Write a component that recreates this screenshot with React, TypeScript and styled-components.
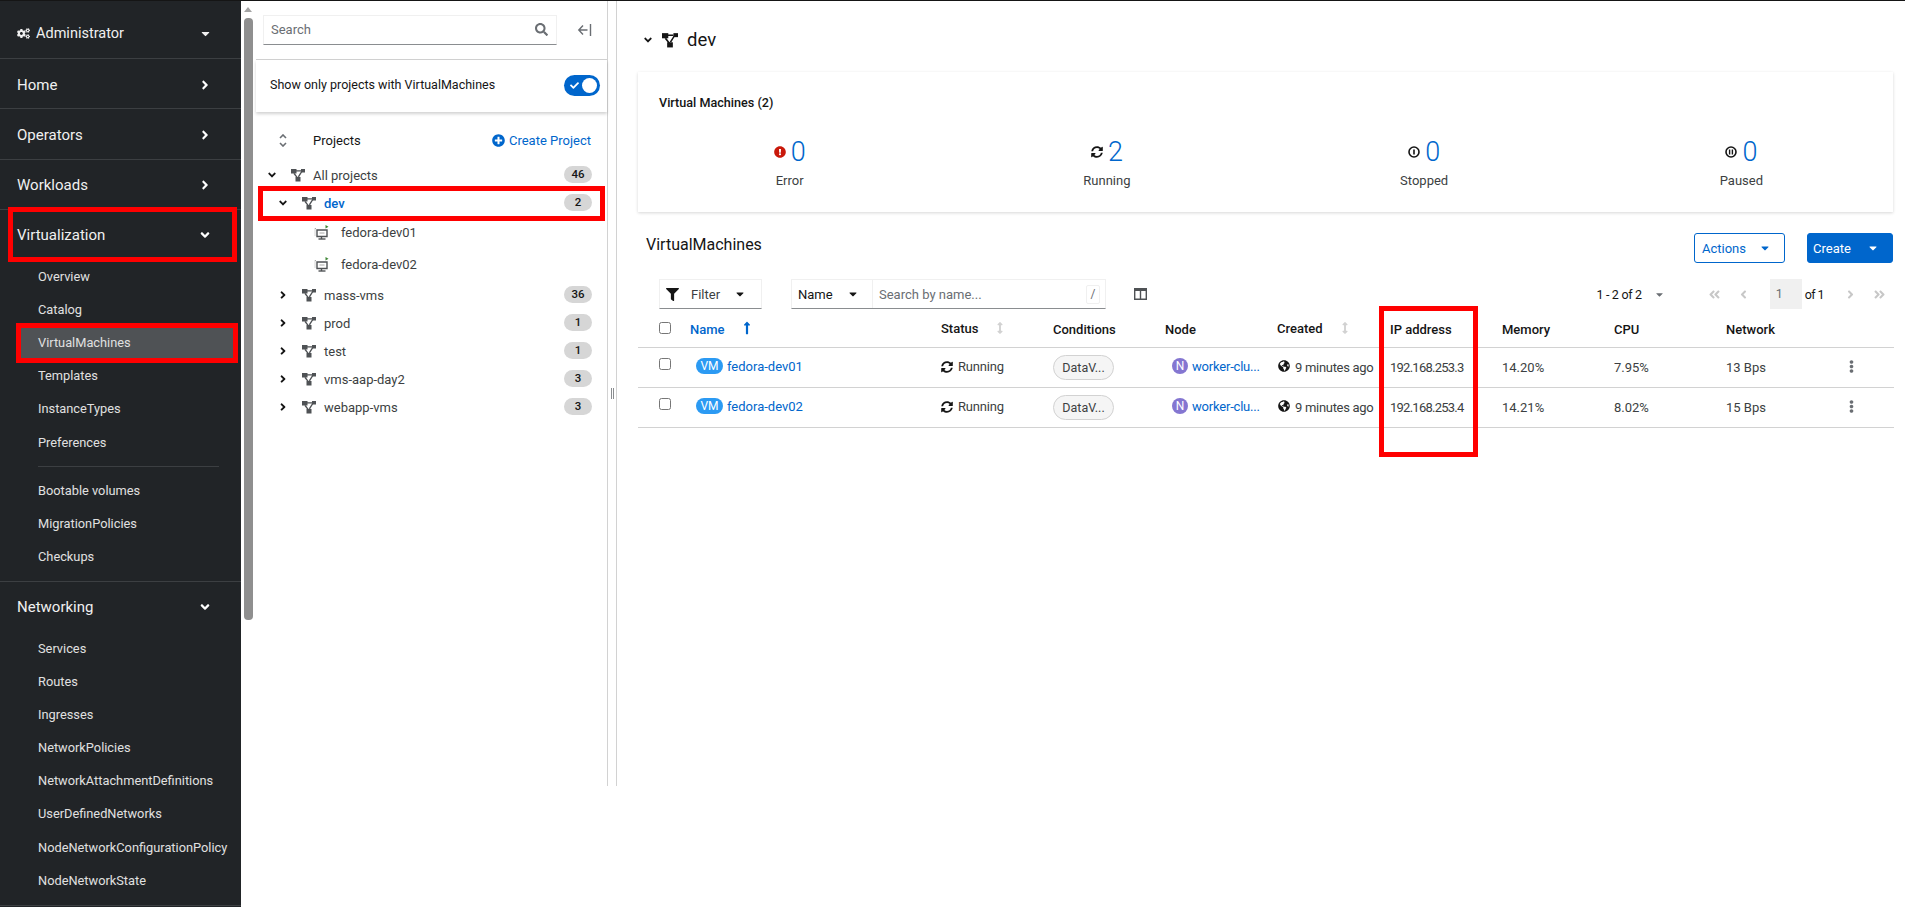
import React from 'react';
import styled, { createGlobalStyle } from 'styled-components';
import {
  FaAngleDown,
  FaAngleRight,
  FaAngleDoubleLeft,
  FaAngleDoubleRight,
  FaAngleLeft,
  FaArrowsAltV,
  FaCaretDown,
  FaCheck,
  FaCogs,
  FaEllipsisV,
  FaExclamationCircle,
  FaFilter,
  FaGlobeAmericas,
  FaLongArrowAltUp,
  FaPlusCircle,
  FaSearch,
  FaSyncAlt,
} from 'react-icons/fa';

const GlobalStyle = createGlobalStyle`
  html, body {
    margin: 0;
    padding: 0;
    background: #fff;
  }
  body {
    font-family: Roboto, "Liberation Sans", sans-serif;
    font-size: 13px;
    color: #151515;
  }
  * {
    box-sizing: border-box;
  }
`;

const Page = styled.div`
  position: relative;
  display: flex;
  width: 1905px;
  height: 907px;
  overflow: hidden;
  border-top: 1px solid #151515;
`;

// Red boxes drawn over the screenshot by whoever annotated it
const Annotation = styled.div<{ $x: number; $y: number; $w: number; $h: number }>`
  position: absolute;
  left: ${(p) => p.$x}px;
  top: ${(p) => p.$y}px;
  width: ${(p) => p.$w}px;
  height: ${(p) => p.$h}px;
  border: 5px solid #f00;
  pointer-events: none;
`;

const Sidebar = styled.nav`
  flex: 0 0 241px;
  background: #212427;
  color: #f0f0f0;
`;

const Perspective = styled.div`
  display: flex;
  align-items: center;
  height: 58px;
  padding: 8px 29px 0 17px;
  border-bottom: 1px solid #3c3f42;
  font-size: 14.5px;
  svg:first-child {
    font-size: 13px;
    margin-right: 6px;
  }
  svg:last-child {
    margin-left: auto;
    font-size: 13px;
  }
`;

const GroupHeader = styled.div<{ $open?: boolean }>`
  display: flex;
  align-items: center;
  justify-content: space-between;
  height: ${(p) => (p.$open ? '48px' : '50.4px')};
  padding: 2px 29px 0 17px;
  border-bottom: ${(p) => (p.$open ? 'none' : '1px solid #3c3f42')};
  font-size: 15px;
  svg {
    font-size: 14px;
    color: #fff;
  }
`;

const SubList = styled.ul`
  display: flex;
  flex-direction: column;
  list-style: none;
  margin: 0;
  padding: 1.4px 0 8px;
  border-bottom: 1px solid #3c3f42;
`;

const SubItem = styled.li<{ $active?: boolean }>`
  display: flex;
  align-items: center;
  flex: 0 0 30px;
  margin: 1.6px 7px 1.6px 21px;
  padding-left: 17px;
  font-size: 12.8px;
  white-space: nowrap;
  color: #e0e0e0;
  background: ${(p) => (p.$active ? '#4f5255' : 'transparent')};
`;

const SubSeparator = styled.li`
  flex: 0 0 1px;
  margin: 7.4px 22px 6.4px 38px;
  background: #3c3f42;
`;

const ScrollTrack = styled.div`
  flex: 0 0 15px;
  padding-left: 3px;
  background: #fff;
`;

const ScrollArrow = styled.div`
  width: 0;
  height: 0;
  margin: 6px 0;
  border-left: 4.5px solid transparent;
  border-right: 4.5px solid transparent;
  border-bottom: 5px solid #a3a3a3;
`;

const ScrollThumb = styled.div`
  width: 9px;
  height: 602px;
  border-radius: 4px;
  background: #8f8f8f;
`;

const ProjectsPanel = styled.aside`
  flex: 0 0 352px;
  height: 785px;
  border-right: 1px solid #d2d2d2;
`;

const SearchRow = styled.div`
  display: flex;
  align-items: center;
  height: 59px;
  padding: 0 15px 1px 7px;
  border-bottom: 1px solid #d2d2d2;
`;

const SearchBox = styled.div`
  display: flex;
  align-items: center;
  width: 294px;
  height: 30px;
  padding: 0 8px 0 7px;
  border: 1px solid #f0f0f0;
  border-bottom-color: #8a8d90;
  svg {
    font-size: 13px;
    color: #6a6e73;
  }
`;

const PlainInput = styled.input`
  flex: 1;
  min-width: 0;
  border: none;
  outline: none;
  padding: 0;
  background: transparent;
  font: inherit;
  font-size: 13px;
  color: #151515;
  &::placeholder {
    color: #6a6e73;
    opacity: 1;
  }
`;

const CollapseIcon = styled.svg`
  width: 15px;
  height: 14px;
  margin-left: auto;
  color: #6a6e73;
`;

const ToggleRow = styled.div`
  display: flex;
  align-items: center;
  justify-content: space-between;
  height: 52px;
  padding: 0 7px 3px 14px;
  font-size: 12.5px;
  box-shadow: 0 2px 3px rgba(3, 3, 3, 0.18);
`;

const Toggle = styled.div`
  display: flex;
  align-items: center;
  justify-content: space-between;
  width: 36px;
  height: 21px;
  margin-top: 2px;
  padding: 0 3px 0 6px;
  border-radius: 11px;
  background: #0066cc;
  svg {
    font-size: 9px;
    color: #fff;
  }
`;

const ToggleKnob = styled.span`
  width: 15px;
  height: 15px;
  border-radius: 50%;
  background: #fff;
`;

const ProjectsHeader = styled.div`
  display: flex;
  align-items: center;
  height: 49px;
  padding: 7px 16px 0 23px;
  font-size: 13px;
`;

const HeaderSortIcon = styled.span`
  display: flex;
  width: 34px;
`;

const CreateLink = styled.a`
  display: flex;
  align-items: center;
  gap: 4px;
  margin-left: auto;
  color: #0066cc;
  svg {
    font-size: 13px;
  }
`;

const TreeRow = styled.div<{ $indent: number }>`
  display: flex;
  align-items: center;
  height: 28px;
  padding-left: ${(p) => p.$indent}px;
  padding-right: 15px;
  font-size: 13px;
  color: #3c3f42;
`;

const TreeChevron = styled.span`
  display: flex;
  width: 25px;
  font-size: 12px;
  color: #151515;
`;

const TreeName = styled.span<{ $active?: boolean }>`
  margin-left: 8px;
  color: ${(p) => (p.$active ? '#0066cc' : '#3c3f42')};
  font-weight: ${(p) => (p.$active ? 500 : 400)};
`;

const CountBadge = styled.span`
  margin-left: auto;
  width: 28px;
  height: 17px;
  margin-top: -2px;
  border-radius: 9px;
  background: #d6d6d6;
  color: #151515;
  font-size: 11.5px;
  font-weight: 500;
  line-height: 17px;
  text-align: center;
`;

const VmList = styled.div`
  margin: -1px 0 1px;
`;

const VmRow = styled.div`
  display: flex;
  align-items: center;
  gap: 12px;
  height: 32px;
  padding-left: 58px;
  font-size: 13px;
  color: #3c3f42;
`;

const Splitter = styled.div`
  display: flex;
  flex: 0 0 8px;
  height: 785px;
  align-items: center;
  justify-content: center;
`;

const SplitterHandle = styled.span`
  width: 3px;
  height: 11px;
  border-left: 1px solid #8a8d90;
  border-right: 1px solid #8a8d90;
`;

const Main = styled.main`
  flex: 1;
  min-width: 0;
  height: 785px;
  padding: 0 12px 0 21px;
  border-left: 1px solid #d2d2d2;
`;

const ProjectTitle = styled.div`
  display: flex;
  align-items: center;
  height: 71px;
  padding: 6px 0 0 4px;
  font-size: 18.5px;
  color: #151515;
  > svg:first-child {
    font-size: 12px;
    margin-right: 8px;
  }
  > svg:nth-child(2) {
    margin-right: 9px;
  }
`;

const Card = styled.section`
  height: 140px;
  padding-top: 21px;
  box-shadow: 0 1px 3px rgba(3, 3, 3, 0.16);
`;

const CardTitle = styled.h3`
  margin: 0 0 0 21px;
  height: 20px;
  font-size: 12.6px;
  font-weight: 500;
  line-height: 20px;
`;

const StatsGrid = styled.div`
  display: grid;
  grid-template-columns: repeat(4, 1fr);
  margin: 23px -7px 0;
`;

const Stat = styled.div`
  display: flex;
  flex-direction: column;
  align-items: center;
`;

const StatValue = styled.div`
  display: flex;
  align-items: center;
  gap: 5px;
  height: 32px;
  color: #0066cc;
  font-size: 27px;
  font-weight: 300;
`;

const StatLabel = styled.div`
  margin-top: 3px;
  font-size: 13px;
  line-height: 20px;
  color: #3c3f42;
`;

const SectionHeader = styled.div`
  display: flex;
  align-items: center;
  height: 30px;
  margin-top: 21px;
  padding-left: 8px;
`;

const SectionTitle = styled.h2`
  margin: 0 auto 7px 0;
  font-size: 16px;
  font-weight: 400;
`;

const ActionButton = styled.button<{ $primary?: boolean }>`
  display: flex;
  align-items: center;
  justify-content: space-between;
  width: ${(p) => (p.$primary ? '86px' : '91px')};
  height: 30px;
  margin-left: ${(p) => (p.$primary ? '22px' : '0')};
  padding: 0 13px 0 ${(p) => (p.$primary ? '5px' : '7px')};
  border: 1px solid #0066cc;
  border-radius: 3px;
  background: ${(p) => (p.$primary ? '#0066cc' : '#fff')};
  color: ${(p) => (p.$primary ? '#fff' : '#0066cc')};
  font: inherit;
  font-size: 13px;
  svg {
    font-size: 12px;
  }
`;

const Toolbar = styled.div`
  display: flex;
  align-items: center;
  height: 30px;
  margin-top: 16px;
  padding-left: 21px;
`;

const FilterSelect = styled.div`
  display: flex;
  align-items: center;
  width: 103px;
  height: 30px;
  padding: 0 15px 0 6px;
  border: 1px solid #f0f0f0;
  border-bottom-color: #8a8d90;
  font-size: 13px;
  color: #3c3f42;
  svg:first-child {
    font-size: 13px;
    color: #151515;
    margin-right: 12px;
  }
  svg:last-child {
    margin-left: auto;
    font-size: 12px;
    color: #151515;
  }
`;

const NameFilter = styled.div`
  display: flex;
  align-items: center;
  width: 315px;
  height: 30px;
  margin-left: 29px;
  border: 1px solid #f0f0f0;
  border-bottom-color: #8a8d90;
`;

const NameSelect = styled.div`
  display: flex;
  align-items: center;
  justify-content: space-between;
  flex: 0 0 81px;
  height: 100%;
  padding: 0 13px 0 6px;
  border-right: 1px solid #f0f0f0;
  font-size: 13px;
  svg {
    font-size: 12px;
  }
`;

const NameInputWrap = styled.div`
  display: flex;
  flex: 1;
  align-items: center;
  padding: 0 5px 0 6px;
`;

const SlashHint = styled.kbd`
  width: 14px;
  height: 19px;
  border: 1px solid #f0f0f0;
  border-radius: 2px;
  font-family: inherit;
  font-size: 12px;
  line-height: 17px;
  text-align: center;
  color: #6a6e73;
`;

const ColumnsIcon = styled.svg`
  width: 13px;
  height: 12px;
  margin-left: 28px;
  color: #4f5255;
`;

const Pagination = styled.div`
  display: flex;
  align-items: center;
  height: 30px;
  margin-left: auto;
  padding-right: 7px;
  font-size: 12.5px;
  letter-spacing: -0.3px;
  color: #151515;
`;

const PageCaret = styled.span`
  display: flex;
  margin: 0 43px 0 12px;
  font-size: 11px;
  color: #6a6e73;
`;

const PageArrow = styled.span<{ $gap?: number }>`
  display: flex;
  margin-right: ${(p) => p.$gap ?? 0}px;
  font-size: 13px;
  color: #c7c7c7;
`;

const PageBox = styled.span`
  width: 32px;
  height: 30px;
  padding-left: 6px;
  background: #f0f0f0;
  color: #6a6e73;
  line-height: 30px;
`;

const PageOf = styled.span`
  margin: 0 20px 0 3px;
  letter-spacing: -0.6px;
`;

const Table = styled.table`
  width: 1256px;
  margin-top: 3px;
  border-collapse: collapse;
  table-layout: fixed;
`;

const Th = styled.th<{ $width: number; $active?: boolean }>`
  width: ${(p) => p.$width}px;
  height: 35px;
  padding: 0 0 0 8px;
  border-bottom: 1px solid #d2d2d2;
  text-align: left;
  font-size: 13px;
  font-weight: 500;
  color: ${(p) => (p.$active ? '#0066cc' : '#151515')};
  white-space: nowrap;
`;

const SortIcon = styled.span<{ $gap: number; $active?: boolean }>`
  margin-left: ${(p) => p.$gap}px;
  font-size: ${(p) => (p.$active ? '14px' : '12px')};
  color: ${(p) => (p.$active ? '#0066cc' : '#d2d2d2')};
  vertical-align: -1px;
`;

const Td = styled.td`
  height: 40px;
  padding: 0 0 0 8px;
  border-bottom: 1px solid #d2d2d2;
  font-size: 13px;
  color: #3c3f42;
  white-space: nowrap;
`;

const IpText = styled.span`
  letter-spacing: -0.75px;
`;

const CheckCell = styled.td`
  padding: 0 0 6px 21px;
  border-bottom: 1px solid #d2d2d2;
`;

const CheckHead = styled.th`
  width: 44px;
  padding: 0 0 3px 21px;
  border-bottom: 1px solid #d2d2d2;
  text-align: left;
`;

const Checkbox = styled.input.attrs({ type: 'checkbox' })`
  display: block;
  width: 12px;
  height: 12px;
  margin: 0;
`;

const ResourceLink = styled.span<{ $offset: number }>`
  display: flex;
  align-items: center;
  gap: 4px;
  margin-left: ${(p) => p.$offset}px;
  margin-top: -2px;
  color: #0066cc;
`;

const NodeName = styled.span`
  letter-spacing: -0.2px;
`;

const KindBadge = styled.span<{ $kind: 'vm' | 'node' }>`
  width: ${(p) => (p.$kind === 'vm' ? '27px' : '16px')};
  height: 16px;
  border-radius: 8px;
  background: ${(p) => (p.$kind === 'vm' ? '#2b9af3' : '#8476d1')};
  color: #fff;
  font-size: 12px;
  line-height: 16px;
  text-align: center;
`;

const StatusCell = styled.span`
  display: flex;
  align-items: center;
  gap: 5px;
  margin-top: -1px;
  letter-spacing: -0.2px;
  svg {
    font-size: 12px;
    color: #151515;
  }
`;

const ConditionChip = styled.span`
  display: inline-block;
  width: 61px;
  height: 25px;
  border: 1px solid #d2d2d2;
  border-radius: 13px;
  background: #f5f5f5;
  font-size: 12.5px;
  line-height: 23px;
  text-align: center;
  color: #3c3f42;
`;

const CreatedCell = styled.span`
  display: flex;
  align-items: center;
  gap: 5px;
  margin-left: 1px;
  letter-spacing: -0.3px;
  svg {
    font-size: 12px;
    color: #151515;
    margin-top: -3px;
  }
`;

const Kebab = styled.span`
  display: flex;
  justify-content: center;
  margin: -2px 0 0 0;
  width: 26px;
  font-size: 13px;
  color: #6a6e73;
`;

function ProjectIcon({ size = 14, color = '#4f5255' }: { size?: number; color?: string }) {
  return (
    <svg width={size} height={size} viewBox="0 0 14 14" fill={color}>
      <rect x="0" y="1" width="5.5" height="4.5" />
      <rect x="10" y="1" width="4" height="3.5" />
      <rect x="4.5" y="9" width="5" height="4.5" />
      <path d="M5 2.2h5v1.4H5zM3.6 5l3.4 4.4-1.1.8L2.4 5.8zM11.2 4l-3.2 5.2-1.2-.7L10 3.4z" />
    </svg>
  );
}

function VmIcon() {
  return (
    <svg width="15" height="15" viewBox="0 0 15 15" fill="none">
      <path d="M1 3.5h1.5M1 3.5v7" stroke="#a8a8a8" strokeWidth="1" strokeDasharray="1 1" />
      <path d="M3 5h10v6.5H3z" fill="#fff" stroke="#4f5255" strokeWidth="1.4" />
      <path d="M5.5 8h5" stroke="#a8a8a8" strokeWidth="1" />
      <path d="M4.5 14h7" stroke="#4f5255" strokeWidth="1.4" />
      <path d="M7.5 11.5v2.5" stroke="#4f5255" strokeWidth="1.4" />
      <path d="M11.5 0l3 1.8-3 1.8z" fill="#3e8635" />
    </svg>
  );
}

function OffIcon() {
  return (
    <svg width="12" height="12" viewBox="0 0 12 12" fill="none" stroke="#151515">
      <circle cx="6" cy="6" r="5" strokeWidth="1.6" />
      <path d="M6 3.4v5.2" strokeWidth="1.6" />
    </svg>
  );
}

function PauseIcon() {
  return (
    <svg width="12" height="12" viewBox="0 0 12 12" fill="none" stroke="#151515">
      <circle cx="6" cy="6" r="5" strokeWidth="1.6" />
      <path d="M4.6 3.6v4.8M7.4 3.6v4.8" strokeWidth="1.4" />
    </svg>
  );
}

const navGroups = ['Home', 'Operators', 'Workloads'];
const virtualizationItems = ['Overview', 'Catalog', 'VirtualMachines', 'Templates', 'InstanceTypes', 'Preferences'];
const virtualizationExtras = ['Bootable volumes', 'MigrationPolicies', 'Checkups'];
const networkingItems = [
  'Services',
  'Routes',
  'Ingresses',
  'NetworkPolicies',
  'NetworkAttachmentDefinitions',
  'UserDefinedNetworks',
  'NodeNetworkConfigurationPolicy',
  'NodeNetworkState',
];

const otherProjects = [
  { name: 'mass-vms', count: 36 },
  { name: 'prod', count: 1 },
  { name: 'test', count: 1 },
  { name: 'vms-aap-day2', count: 3 },
  { name: 'webapp-vms', count: 3 },
];

const stats = [
  { label: 'Error', value: 0, icon: <FaExclamationCircle size={12} color="#c9190b" /> },
  { label: 'Running', value: 2, icon: <FaSyncAlt size={12} color="#151515" /> },
  { label: 'Stopped', value: 0, icon: <OffIcon /> },
  { label: 'Paused', value: 0, icon: <PauseIcon /> },
];

const vms = [
  { name: 'fedora-dev01', ip: '192.168.253.3', memory: '14.20%', cpu: '7.95%', network: '13 Bps' },
  { name: 'fedora-dev02', ip: '192.168.253.4', memory: '14.21%', cpu: '8.02%', network: '15 Bps' },
];

function App() {
  return (
    <Page>
      <GlobalStyle />
      <Sidebar>
        <Perspective>
          <FaCogs />
          Administrator
          <FaCaretDown />
        </Perspective>
        {navGroups.map((group) => (
          <GroupHeader key={group}>
            {group}
            <FaAngleRight />
          </GroupHeader>
        ))}
        <GroupHeader $open>
          Virtualization
          <FaAngleDown />
        </GroupHeader>
        <SubList>
          {virtualizationItems.map((item) => (
            <SubItem key={item} $active={item === 'VirtualMachines'}>
              {item}
            </SubItem>
          ))}
          <SubSeparator />
          {virtualizationExtras.map((item) => (
            <SubItem key={item}>{item}</SubItem>
          ))}
        </SubList>
        <GroupHeader $open>
          Networking
          <FaAngleDown />
        </GroupHeader>
        <SubList>
          {networkingItems.map((item) => (
            <SubItem key={item}>{item}</SubItem>
          ))}
        </SubList>
      </Sidebar>

      <ScrollTrack>
        <ScrollArrow />
        <ScrollThumb />
      </ScrollTrack>

      <ProjectsPanel>
        <SearchRow>
          <SearchBox>
            <PlainInput placeholder="Search" />
            <FaSearch />
          </SearchBox>
          <CollapseIcon viewBox="0 0 15 14" fill="none" stroke="currentColor" strokeWidth="1.4">
            <path d="M6 2.5L1.8 7 6 11.5M2 7h8.5M13.5 1v12" />
          </CollapseIcon>
        </SearchRow>
        <ToggleRow>
          Show only projects with VirtualMachines
          <Toggle>
            <FaCheck />
            <ToggleKnob />
          </Toggle>
        </ToggleRow>
        <ProjectsHeader>
          <HeaderSortIcon>
            <svg width="8" height="13" viewBox="0 0 8 13" fill="none" stroke="#6a6e73" strokeWidth="1.6">
              <path d="M1 4l3-3 3 3M1 9l3 3 3-3" />
            </svg>
          </HeaderSortIcon>
          Projects
          <CreateLink>
            <FaPlusCircle />
            Create Project
          </CreateLink>
        </ProjectsHeader>
        <TreeRow $indent={10}>
          <TreeChevron>
            <FaAngleDown />
          </TreeChevron>
          <ProjectIcon />
          <TreeName>All projects</TreeName>
          <CountBadge>46</CountBadge>
        </TreeRow>
        <TreeRow $indent={21}>
          <TreeChevron>
            <FaAngleDown />
          </TreeChevron>
          <ProjectIcon />
          <TreeName $active>dev</TreeName>
          <CountBadge>2</CountBadge>
        </TreeRow>
        <VmList>
          {vms.map((vm) => (
            <VmRow key={vm.name}>
              <VmIcon />
              {vm.name}
            </VmRow>
          ))}
        </VmList>
        {otherProjects.map((project) => (
          <TreeRow key={project.name} $indent={21}>
            <TreeChevron>
              <FaAngleRight />
            </TreeChevron>
            <ProjectIcon />
            <TreeName>{project.name}</TreeName>
            <CountBadge>{project.count}</CountBadge>
          </TreeRow>
        ))}
      </ProjectsPanel>

      <Splitter>
        <SplitterHandle />
      </Splitter>

      <Main>
        <ProjectTitle>
          <FaAngleDown />
          <ProjectIcon size={16} color="#151515" />
          dev
        </ProjectTitle>
        <Card>
          <CardTitle>Virtual Machines (2)</CardTitle>
          <StatsGrid>
            {stats.map((stat) => (
              <Stat key={stat.label}>
                <StatValue>
                  {stat.icon}
                  {stat.value}
                </StatValue>
                <StatLabel>{stat.label}</StatLabel>
              </Stat>
            ))}
          </StatsGrid>
        </Card>
        <SectionHeader>
          <SectionTitle>VirtualMachines</SectionTitle>
          <ActionButton>
            Actions
            <FaCaretDown />
          </ActionButton>
          <ActionButton $primary>
            Create
            <FaCaretDown />
          </ActionButton>
        </SectionHeader>
        <Toolbar>
          <FilterSelect>
            <FaFilter />
            Filter
            <FaCaretDown />
          </FilterSelect>
          <NameFilter>
            <NameSelect>
              Name
              <FaCaretDown />
            </NameSelect>
            <NameInputWrap>
              <PlainInput placeholder="Search by name..." />
              <SlashHint>/</SlashHint>
            </NameInputWrap>
          </NameFilter>
          <ColumnsIcon viewBox="0 0 13 12" fill="currentColor">
            <path d="M0 0h13v12H0zM1.4 3v7.6h4.4V3zm5.8 0v7.6h4.4V3z" fillRule="evenodd" />
          </ColumnsIcon>
          <Pagination>
            1 - 2 of 2
            <PageCaret>
              <FaCaretDown />
            </PageCaret>
            <PageArrow $gap={16}>
              <FaAngleDoubleLeft />
            </PageArrow>
            <PageArrow $gap={20}>
              <FaAngleLeft />
            </PageArrow>
            <PageBox>1</PageBox>
            <PageOf>of 1</PageOf>
            <PageArrow $gap={16}>
              <FaAngleRight />
            </PageArrow>
            <PageArrow>
              <FaAngleDoubleRight />
            </PageArrow>
          </Pagination>
        </Toolbar>
        <Table>
          <thead>
            <tr>
              <CheckHead>
                <Checkbox />
              </CheckHead>
              <Th $width={251} $active>
                Name
                <SortIcon $gap={15} $active>
                  <FaLongArrowAltUp />
                </SortIcon>
              </Th>
              <Th $width={112}>
                Status
                <SortIcon $gap={16}>
                  <FaArrowsAltV />
                </SortIcon>
              </Th>
              <Th $width={112}>Conditions</Th>
              <Th $width={112}>Node</Th>
              <Th $width={113}>
                Created
                <SortIcon $gap={16}>
                  <FaArrowsAltV />
                </SortIcon>
              </Th>
              <Th $width={112}>IP address</Th>
              <Th $width={112}>Memory</Th>
              <Th $width={112}>CPU</Th>
              <Th $width={112}>Network</Th>
              <Th $width={64} />
            </tr>
          </thead>
          <tbody>
            {vms.map((vm) => (
              <tr key={vm.name}>
                <CheckCell>
                  <Checkbox />
                </CheckCell>
                <Td>
                  <ResourceLink $offset={6}>
                    <KindBadge $kind="vm">VM</KindBadge>
                    {vm.name}
                  </ResourceLink>
                </Td>
                <Td>
                  <StatusCell>
                    <FaSyncAlt />
                    Running
                  </StatusCell>
                </Td>
                <Td>
                  <ConditionChip>DataV...</ConditionChip>
                </Td>
                <Td>
                  <ResourceLink $offset={7}>
                    <KindBadge $kind="node">N</KindBadge>
                    <NodeName>worker-clu...</NodeName>
                  </ResourceLink>
                </Td>
                <Td>
                  <CreatedCell>
                    <FaGlobeAmericas />9 minutes ago
                  </CreatedCell>
                </Td>
                <Td>
                  <IpText>{vm.ip}</IpText>
                </Td>
                <Td>{vm.memory}</Td>
                <Td>{vm.cpu}</Td>
                <Td>{vm.network}</Td>
                <Td>
                  <Kebab>
                    <FaEllipsisV />
                  </Kebab>
                </Td>
              </tr>
            ))}
          </tbody>
        </Table>
      </Main>

      <Annotation $x={8} $y={206} $w={229} $h={55} />
      <Annotation $x={16} $y={322} $w={222} $h={40} />
      <Annotation $x={258} $y={185} $w={347} $h={35} />
      <Annotation $x={1379} $y={305} $w={99} $h={151} />
    </Page>
  );
}

export default App;
